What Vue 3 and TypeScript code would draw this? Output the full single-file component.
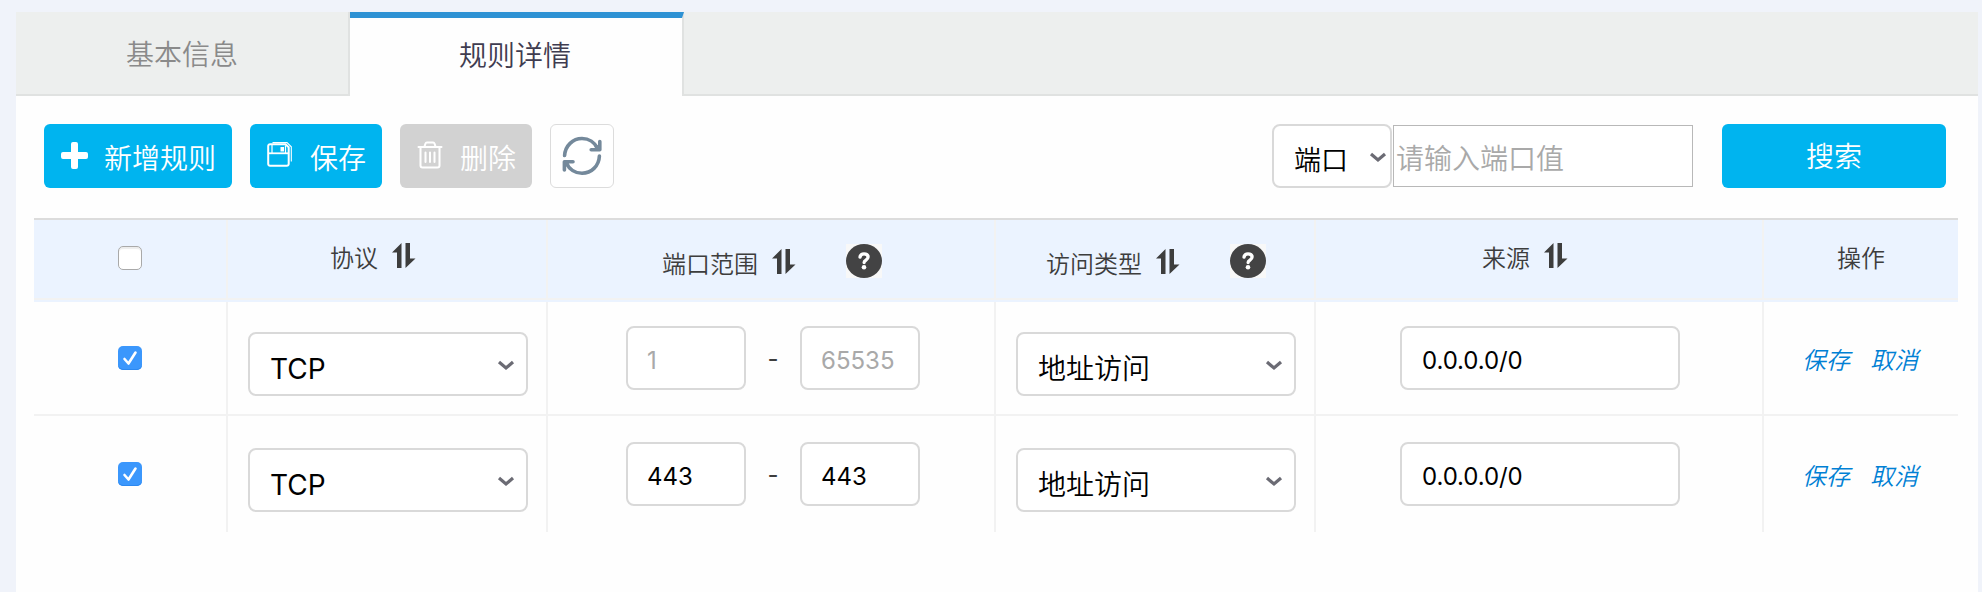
<script setup lang="ts">
import { ref } from 'vue'

interface Rule {
  checked: boolean
  protocol: string
  from: string
  to: string
  access: string
  source: string
}

const tabs = ['基本信息', '规则详情']
const activeTab = ref(1)
const searchField = ref('端口')
const searchText = ref('')
const allChecked = ref(false)

const columns = [
  { key: 'protocol', label: '协议', help: false },
  { key: 'ports', label: '端口范围', help: true },
  { key: 'access', label: '访问类型', help: true },
  { key: 'source', label: '来源', help: false },
]

const rules = ref<Rule[]>([
  { checked: true, protocol: 'TCP', from: '', to: '', access: '地址访问', source: '0.0.0.0/0' },
  { checked: true, protocol: 'TCP', from: '443', to: '443', access: '地址访问', source: '0.0.0.0/0' },
])
</script>

<template>
  <div class="page">
    <main class="panel">
      <nav class="tabs">
        <button
          v-for="(tab, i) in tabs"
          :key="tab"
          class="tab"
          :class="{ active: i === activeTab }"
          @click="activeTab = i"
        >{{ tab }}</button>
        <div class="tabs-rest"></div>
      </nav>

      <div class="toolbar">
        <button class="btn add">
          <svg class="plus" width="27" height="27" viewBox="0 0 27 27">
            <path d="M10 2a2 2 0 0 1 2-2h3a2 2 0 0 1 2 2v8h8a2 2 0 0 1 2 2v3a2 2 0 0 1-2 2h-8v8a2 2 0 0 1-2 2h-3a2 2 0 0 1-2-2v-8H2a2 2 0 0 1-2-2v-3a2 2 0 0 1 2-2h8z" fill="#fff" />
          </svg>
          <span>新增规则</span>
        </button>
        <button class="btn save">
          <svg class="disk" width="26" height="26" viewBox="0 0 26 26" fill="none" stroke="#fff">
            <path d="M3 2.2h15.500l3.200 3V22a1.8 1.8 0 0 1-1.800 1.800H3A1.8 1.8 0 0 1 1.2 22V4A1.8 1.8 0 0 1 3 2.2z" stroke-width="2" />
            <path d="M1.500 11.300h20" stroke-width="1.800" />
            <path d="M5 2.500v8.500M18.500 3.500v7.500" stroke-width="1.200" />
            <path d="M13.500 5h3.500v4.500h-3.500z" fill="#fff" stroke="none" />
            <path d="M5.500.6h14.500l4.300 4.200V19.500" stroke-width="1.100" />
          </svg>
          <span>保存</span>
        </button>
        <button class="btn del" disabled>
          <svg class="trash" width="26" height="28" viewBox="0 0 26 28" fill="none" stroke="#fff" stroke-width="2" stroke-linecap="round" stroke-linejoin="round">
            <path d="M1.500 6h23M3.500 6v18.500a2 2 0 0 0 2 2h15a2 2 0 0 0 2-2V6M7.500 5.500l1-3a1.500 1.500 0 0 1 1.400-1h6.200a1.500 1.500 0 0 1 1.400 1l1 3" />
            <path d="M8.500 11.500v9.500M13 11.500v9.500M17.500 11.500v9.500" />
          </svg>
          <span>删除</span>
        </button>
        <button class="refresh" aria-label="刷新">
          <svg width="40" height="40" viewBox="0 0 40 40" fill="none" stroke="#74899b" stroke-width="3.600" stroke-linecap="round" stroke-linejoin="round">
            <path d="M2.600 19.500C3.200 9.800 10.800 2.500 20 2.500c6.800 0 12.800 4 15.600 10" />
            <path d="M37.800 5.500v8.200h-8.600M37.500 13.500l-3-3" />
            <path d="M37.400 20C37 30 29.300 37.300 20 37.300c-6.800 0-12.800-4-15.600-10" />
            <path d="M2.400 34v-8.200H11M2.600 26l3 3" />
          </svg>
        </button>

        <div class="search">
          <label class="select small">
            <select v-model="searchField"><option>端口</option></select>
            <svg class="chevron" width="18" height="11" viewBox="0 0 18 11"><path d="M2 2l7 6 7-6" /></svg>
          </label>
          <input v-model="searchText" class="search-input" placeholder="请输入端口值" />
          <button class="btn go"><span>搜索</span></button>
        </div>
      </div>

      <section class="table">
        <div class="row head">
          <div class="cell check">
            <label class="box"><input v-model="allChecked" type="checkbox" /></label>
          </div>
          <div v-for="c in columns" :key="c.key" class="cell" :class="['h-' + c.key, { helped: c.help }]">
            <span class="label">{{ c.label }}</span>
            <svg class="sort" width="24" height="25" viewBox="0 0 24 25" fill="#3d3d3d">
              <path d="M0 9.500L9.500 0v25H5V9.500zM13.500 0H18v15.500h5.500L13.500 25z" />
            </svg>
            <span v-if="c.help" class="help">
              <svg width="36" height="34" viewBox="0 0 36 34">
                <ellipse cx="18" cy="17" rx="18" ry="17" fill="#434344" />
                <path d="M14 13.200c.3-2.300 1.900-3.400 4-3.400 2.400 0 4.100 1.300 4.100 3.300 0 3-4 2.900-4 5.400" fill="none" stroke="#fff" stroke-width="3.300" stroke-linecap="round" />
                <circle cx="18" cy="23.300" r="2.300" fill="#fff" />
              </svg>
            </span>
          </div>
          <div class="cell h-ops"><span class="label">操作</span></div>
        </div>

        <div v-for="(r, i) in rules" :key="i" class="row body">
          <div class="cell check">
            <label class="box" :class="{ on: r.checked }">
              <input v-model="r.checked" type="checkbox" />
              <svg v-if="r.checked" width="24" height="24" viewBox="0 0 24 24" fill="none" stroke="#fff" stroke-width="2.600" stroke-linecap="round" stroke-linejoin="round">
                <path d="M6.500 13l4 4.500 7-11" />
              </svg>
            </label>
          </div>
          <div class="cell pick">
            <label class="select">
              <select v-model="r.protocol" class="latin"><option>TCP</option></select>
              <svg class="chevron" width="18" height="11" viewBox="0 0 18 11"><path d="M2 2l7 6 7-6" /></svg>
            </label>
          </div>
          <div class="cell ports">
            <input v-model="r.from" class="field port" placeholder="1" />
            <span class="dash">-</span>
            <input v-model="r.to" class="field port" placeholder="65535" />
          </div>
          <div class="cell pick">
            <label class="select">
              <select v-model="r.access"><option>地址访问</option></select>
              <svg class="chevron" width="18" height="11" viewBox="0 0 18 11"><path d="M2 2l7 6 7-6" /></svg>
            </label>
          </div>
          <div class="cell source"><input v-model="r.source" class="field addr" /></div>
          <div class="cell ops"><a>保存</a><a>取消</a></div>
        </div>
      </section>
    </main>
  </div>
</template>

<style>
body {
  background: #f0f3fa;
}
</style>

<style scoped>
* {
  box-sizing: border-box;
}
.page {
  height: 592px;
  padding: 12px 4px 0 16px;
  background: #f0f3fa;
  font-family: Inter, "Noto Sans CJK SC", sans-serif;
  font-weight: 350;
  color: #3d3d3d;
  overflow: hidden;
}
button,
input,
select {
  font: inherit;
  margin: 0;
  outline: none;
}
svg {
  display: block;
  flex: none;
}
.panel {
  height: 580px;
  background: #fefefe;
}
.tabs {
  display: flex;
  height: 84px;
}
.tab {
  width: 334px;
  padding: 4px 0 0 0;
  border: 0 solid #e0e2e1;
  border-width: 0 2px 2px 0;
  background: #edefee;
  color: #8a8a8a;
  font-size: 28px;
  line-height: 78px;
}
.tab.active {
  padding: 0 2px 2px 0;
  border-top: 6px solid #2e92d4;
  border-bottom: 0;
  background: #fefefe;
  color: #3f3c50;
  line-height: 70px;
}
.tabs-rest {
  flex: 1;
  background: #edefee;
  border-bottom: 2px solid #e0e2e1;
}
.toolbar {
  display: flex;
  gap: 18px;
  padding: 28px 32px 0 28px;
  height: 122px;
}
.btn {
  display: flex;
  align-items: center;
  height: 64px;
  padding: 0;
  border: 0;
  border-radius: 6px;
  background: #00b4ef;
  color: #fff;
  font-size: 28px;
  line-height: 40px;
  white-space: nowrap;
}
.btn span {
  padding-top: 6px;
}
.add {
  width: 188px;
  padding-left: 17px;
  gap: 16px;
}
.save,
.del {
  width: 132px;
  padding-left: 17px;
  gap: 17px;
}
.plus,
.disk,
.trash {
  margin-bottom: 2px;
}
.del {
  background: #d2d2d2;
}
.refresh {
  display: flex;
  align-items: center;
  justify-content: center;
  width: 64px;
  height: 64px;
  padding: 0;
  border: 1px solid #dcdcdc;
  border-radius: 6px;
  background: #fff;
}
.search {
  display: flex;
  margin-left: auto;
}
.select {
  position: relative;
  display: block;
  width: 280px;
  height: 64px;
}
.select select {
  appearance: none;
  width: 100%;
  height: 100%;
  padding: 9px 40px 0 20px;
  border: 2px solid #d9d9d9;
  border-radius: 8px;
  background: #fff;
  color: #000;
  font-size: 28px;
}
.select .latin {
  font-weight: 400;
}
.select .chevron {
  position: absolute;
  right: 13px;
  top: 28px;
  fill: none;
  stroke: #6b6b74;
  stroke-width: 3.2;
}
.select.small {
  width: 120px;
}
.select.small select {
  padding: 9px 0 0 20px;
  font-size: 27px;
}
.select.small .chevron {
  right: 5px;
}
.search-input {
  width: 300px;
  height: 62px;
  margin: 1px 29px 0 1px;
  padding: 5px 2px 0;
  border: 1px solid #b8b8b8;
  background: #fff;
  font-size: 28px;
}
input::placeholder {
  color: #a9a9a9;
  opacity: 1;
}
.go {
  justify-content: center;
  width: 224px;
}
.go span {
  padding-top: 1px;
}
.table {
  margin: 0 20px 0 18px;
}
.row {
  display: grid;
  grid-template-columns: 194px 320px 448px 320px 448px 194px;
}
.cell {
  display: flex;
  align-items: flex-start;
  border-right: 2px solid #f2f2f2;
}
.cell:last-child {
  border-right: 0;
}
.head {
  height: 84px;
  padding-bottom: 2px;
  border-top: 2px solid #dcdcdc;
  background: #ebf3ff;
}
.head .cell {
  padding-top: 23px;
  border-bottom: 2px solid #f2f2f2;
  font-size: 24px;
  line-height: 32px;
}
.head .cell.helped {
  padding-top: 24px;
}
.helped .label,
.helped .sort {
  margin-top: 5px;
}
.label {
  margin-right: 14px;
}
.head .h-protocol {
  padding-left: 102px;
}
.head .h-ports {
  padding-left: 114px;
}
.head .h-access {
  padding-left: 50px;
}
.head .h-source {
  padding-left: 166px;
}
.head .h-ops {
  padding-left: 73px;
}
.help {
  margin-left: 50px;
  background: #f8f8f8;
}
.body {
  height: 116px;
}
.body:nth-child(2) {
  height: 114px;
  border-bottom: 2px solid #f2f2f2;
}
.cell.check {
  justify-content: center;
  padding-left: 0;
}
.head .cell.check {
  padding-top: 26px;
}
.box {
  display: block;
  width: 24px;
  height: 24px;
  border: 1px solid #a9a9a9;
  border-radius: 5px;
  background: #fff;
  box-shadow: inset 0 2px 1px #ededed;
}
.box.on {
  border: 0;
  background: #3b97fc;
  box-shadow: inset 0 -1px 0 #2c88f0;
}
.box input {
  display: none;
}
.body .check {
  padding-top: 44px;
}
.body .pick {
  padding: 30px 0 0 20px;
}
.body .ports {
  padding: 24px 0 0 78px;
}
.body .source {
  padding: 24px 0 0 84px;
}
.body .ops {
  gap: 20px;
  padding: 42px 0 0 38px;
  font-size: 24px;
  line-height: 34px;
  font-style: italic;
  color: #0080d4;
}
.body:nth-child(3) .check {
  padding-top: 46px;
}
.body:nth-child(3) .pick {
  padding-top: 32px;
}
.body:nth-child(3) .ports,
.body:nth-child(3) .source {
  padding-top: 26px;
}
.body:nth-child(3) .ops {
  padding-top: 44px;
}
.field {
  height: 64px;
  padding: 4px 0 0 20px;
  border: 2px solid #d9d9d9;
  border-radius: 8px;
  background: #fff;
  color: #000;
  font-size: 24px;
  font-weight: 400;
}
.port {
  width: 120px;
  padding-left: 19px;
}
.addr {
  width: 280px;
  letter-spacing: -0.1px;
}
.dash {
  width: 54px;
  padding-top: 18px;
  text-align: center;
  font-size: 24px;
  line-height: 30px;
  font-weight: 400;
}
</style>
